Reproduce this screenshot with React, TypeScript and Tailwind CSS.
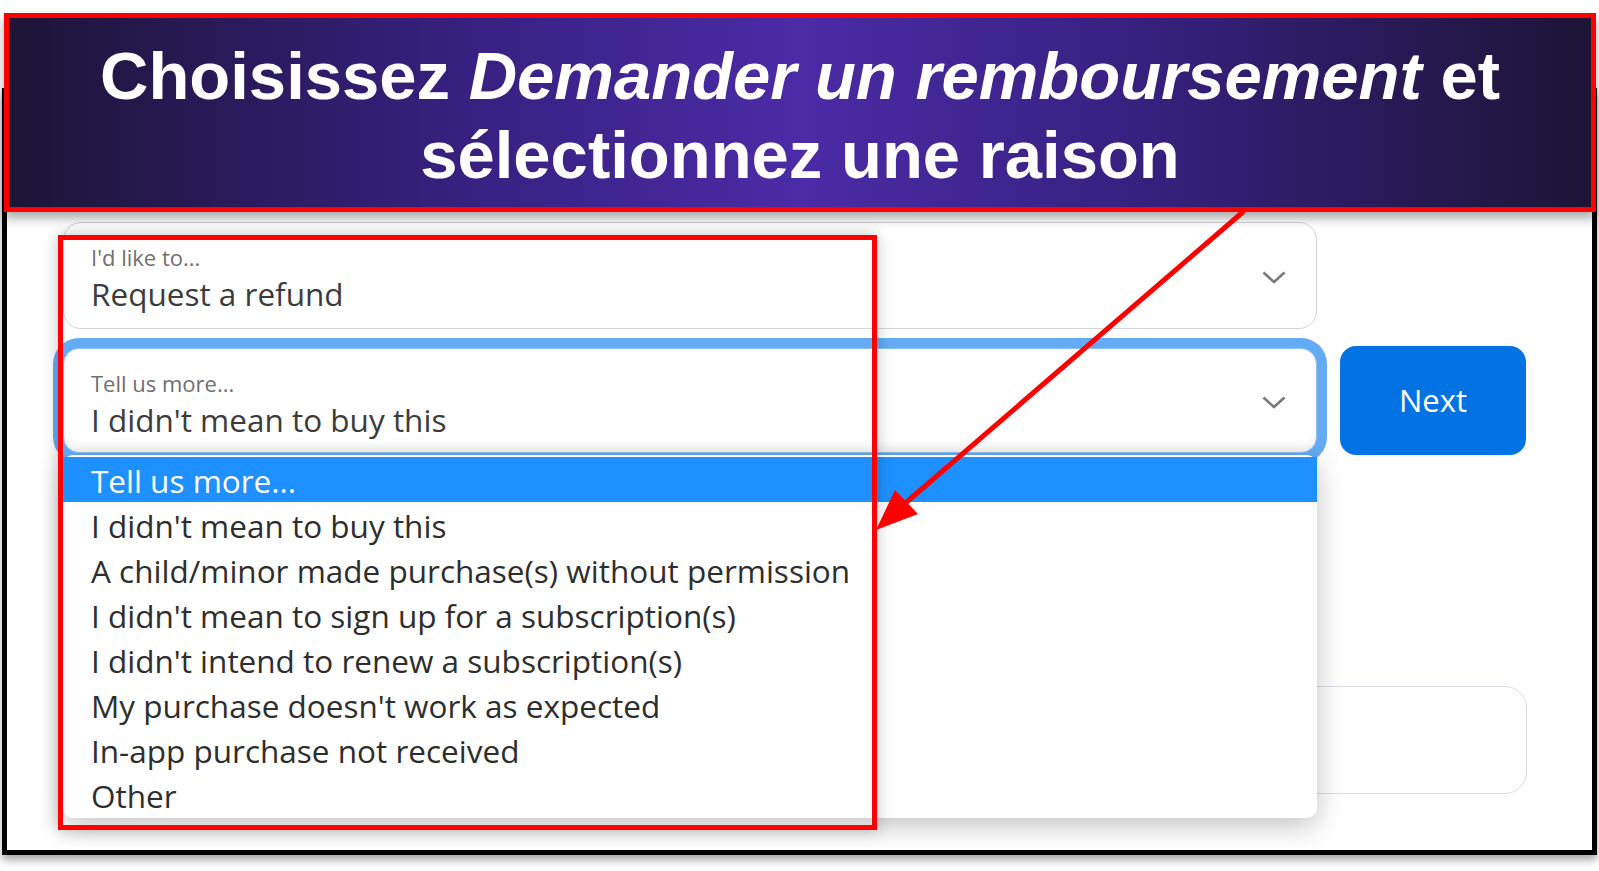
const REASONS = [
  "Tell us more...",
  "I didn't mean to buy this",
  "A child/minor made purchase(s) without permission",
  "I didn't mean to sign up for a subscription(s)",
  "I didn't intend to renew a subscription(s)",
  "My purchase doesn't work as expected",
  "In-app purchase not received",
  "Other",
];

function Chevron() {
  return (
    <svg width="24" height="13" viewBox="0 0 24 13" fill="none" className="mt-[4px] shrink-0">
      <path d="M1.5 1.5 12 11 22.5 1.5" stroke="#7a7a7a" strokeWidth="2.6" />
    </svg>
  );
}

function SelectText({ label, value }: { label: string; value: string }) {
  return (
    <div className="flex flex-col self-start pt-[20px]">
      <span className="text-[22px] leading-[28px] text-[#707070]">{label}</span>
      <span className="mt-[3px] text-[31.5px] leading-[40px] text-[#3c3c3c]">{value}</span>
    </div>
  );
}

export default function App() {
  return (
    <div className="relative h-[871px] w-[1599px] overflow-hidden bg-white font-['Open_Sans',sans-serif]">
      {/* screenshot frame */}
      <div className="mx-[2px] mt-[88px] h-[767px] border-[5px] border-black bg-white shadow-[0_5px_8px_rgba(0,0,0,0.35)]">
        <div className="pl-[56px] pr-[66px] pt-[129px]">
          <div className="flex h-[107px] w-[1254px] items-center justify-between rounded-[18px] border border-[#d4d4d4] pl-[27px] pr-[30px]">
            <SelectText label="I'd like to..." value="Request a refund" />
            <Chevron />
          </div>

          <div className="mt-[17px] flex items-center gap-[23px]">
            <div className="relative">
              <div className="flex h-[105px] w-[1254px] items-center justify-between rounded-[16px] border border-[#8fc2f5] bg-white pl-[27px] pr-[30px] shadow-[0_0_0_10px_#63acf5,inset_0_-5px_6px_rgba(0,0,0,0.05)]">
                <SelectText label="Tell us more..." value="I didn't mean to buy this" />
                <Chevron />
              </div>
              <ul className="absolute left-0 right-0 top-full z-10 mt-[2px] rounded-[10px] bg-white pb-[1px] pt-[2px] shadow-[0_8px_28px_rgba(0,0,0,0.24)]">
                {REASONS.map((r, i) => (
                  <li
                    key={r}
                    className={
                      "h-[45px] pl-[28px] text-[31.5px] leading-[47px] " +
                      (i === 0 ? "bg-[#1e90ff] text-white" : "text-[#2e2e2e]")
                    }
                  >
                    {r}
                  </li>
                ))}
              </ul>
            </div>
            <button className="flex h-[109px] w-[187px] items-center justify-center rounded-[16px] bg-[#0373e3] text-[31px] font-medium text-white">
              Next
            </button>
          </div>

          <div className="mt-[231px] h-[108px] w-[1464px] rounded-[22px] border border-[#dcdce2]" />
        </div>
      </div>

      {/* annotation: highlight box */}
      <div className="absolute left-[58px] top-[235px] z-20 h-[595px] w-[819px] border-[5px] border-[#ff0000] shadow-[0_0_14px_rgba(0,0,0,0.25)]" />

      {/* annotation: banner */}
      <div className="absolute left-[4px] top-[13px] z-30 h-[199px] w-[1592px] border-[5px] border-[#ff0000] bg-[linear-gradient(90deg,#1d1436_0%,#36207e_28%,#4b2ba6_50%,#36207e_72%,#1d1436_100%)] pt-[18px] text-center font-['Liberation_Sans',Arial,sans-serif] text-[67px] font-bold leading-[79px] text-white shadow-[0_6px_10px_rgba(0,0,0,0.35)]">
        <div>
          Choisissez <i>Demander un remboursement</i> et
        </div>
        <div>sélectionnez une raison</div>
      </div>

      {/* annotation: arrow */}
      <svg className="pointer-events-none absolute inset-0 z-40" width="1599" height="871" viewBox="0 0 1599 871">
        <line x1="1244" y1="211" x2="902" y2="506" stroke="#ff0000" strokeWidth="5" />
        <polygon points="876,530 895,490 918,514" fill="#ff0000" />
      </svg>
    </div>
  );
}
